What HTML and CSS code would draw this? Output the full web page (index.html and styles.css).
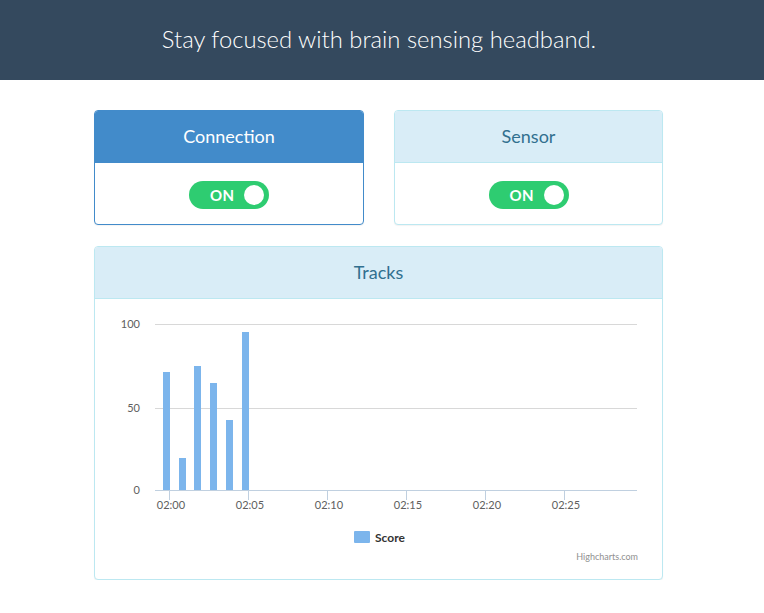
FILE: index.html
```html
<!DOCTYPE html>
<html>
<head>
<meta charset="utf-8">
<link rel="stylesheet" href="styles.css">
</head>
<body>
<header class="top">
  <h1 class="top-title">Stay focused with brain sensing headband.</h1>
</header>
<main class="wrap">
  <div class="row">
    <section class="panel panel-primary">
      <div class="panel-heading">Connection</div>
      <div class="panel-body">
        <div class="toggle"><span class="toggle-label">ON</span><span class="knob"></span></div>
      </div>
    </section>
    <section class="panel panel-info">
      <div class="panel-heading">Sensor</div>
      <div class="panel-body">
        <div class="toggle"><span class="toggle-label">ON</span><span class="knob"></span></div>
      </div>
    </section>
  </div>
  <section class="panel panel-info tracks">
    <div class="panel-heading">Tracks</div>
    <div class="chart-body">
      <svg class="chart" width="567" height="279" viewBox="95 299 567 279">
        <g class="grid">
          <line x1="155" y1="324.5" x2="637" y2="324.5"/>
          <line x1="155" y1="408.5" x2="637" y2="408.5"/>
        </g>
        <g class="axis">
          <line x1="155" y1="490.5" x2="637" y2="490.5"/>
          <line x1="169.5" y1="490" x2="169.5" y2="500"/>
          <line x1="248.5" y1="490" x2="248.5" y2="500"/>
          <line x1="327.5" y1="490" x2="327.5" y2="500"/>
          <line x1="406.5" y1="490" x2="406.5" y2="500"/>
          <line x1="485.5" y1="490" x2="485.5" y2="500"/>
          <line x1="564.5" y1="490" x2="564.5" y2="500"/>
        </g>
        <g class="bars">
          <rect x="163" y="372" width="7" height="118"/>
          <rect x="179" y="458" width="7" height="32"/>
          <rect x="194" y="366" width="7" height="124"/>
          <rect x="210" y="383" width="7" height="107"/>
          <rect x="226" y="420" width="7" height="70"/>
          <rect x="242" y="332" width="7" height="158"/>
        </g>
        <g class="ylabels">
          <text x="140" y="328">100</text>
          <text x="140" y="412">50</text>
          <text x="140" y="494">0</text>
        </g>
        <g class="xlabels">
          <text x="171" y="509">02:00</text>
          <text x="250" y="509">02:05</text>
          <text x="329" y="509">02:10</text>
          <text x="408" y="509">02:15</text>
          <text x="487" y="509">02:20</text>
          <text x="566" y="509">02:25</text>
        </g>
        <rect class="legend-sym" x="354" y="531" width="16" height="12" rx="1"/>
        <text class="legend-text" x="375" y="542">Score</text>
        <text class="credits" x="638" y="560">Highcharts.com</text>
      </svg>
    </div>
  </section>
</main>
</body>
</html>
```
FILE: styles.css
```css
* { box-sizing: border-box; }
body {
  margin: 0;
  font-family: Lato, "Open Sans", sans-serif;
  background: #fff;
  color: #333;
}
.top {
  height: 80px;
  background: #34495e;
  display: flex;
  align-items: center;
  justify-content: center;
  padding: 0 6px 3px 0;
}
.top-title {
  margin: 0;
  font-size: 23.8px;
  font-weight: 300;
  color: #fff;
}
.wrap {
  width: 570px;
  margin: 30px 0 0 94px;
}
.row {
  display: grid;
  grid-template-columns: 270px 269px;
  column-gap: 30px;
  margin-bottom: 21px;
}
.panel {
  border: 1px solid #bce8f1;
  border-radius: 4px;
  background: #fff;
  box-shadow: 0 1px 1px rgba(0,0,0,0.05);
  overflow: hidden;
}
.panel-heading {
  height: 52px;
  border-bottom: 1px solid #bce8f1;
  display: flex;
  align-items: center;
  justify-content: center;
  padding-bottom: 2px;
  font-size: 18px;
  background: #d9edf7;
  color: #31708f;
}
.panel-primary { border-color: #428bca; }
.panel-primary .panel-heading {
  background: #428bca;
  border-bottom-color: #428bca;
  color: #fff;
}
.panel-body {
  padding: 18px 0 15px;
  display: flex;
  justify-content: center;
}
.toggle {
  width: 80px;
  height: 28px;
  border-radius: 14px;
  background: #2ecc71;
  display: flex;
  align-items: center;
  padding: 0 5px 0 21px;
  justify-content: space-between;
}
.toggle-label {
  color: #fff;
  font-weight: 700;
  font-size: 15px;
  letter-spacing: 0.5px;
}
.knob {
  width: 20px;
  height: 20px;
  border-radius: 50%;
  background: #fff;
}
.tracks { width: 569px; }
.chart-body { height: 280px; }
.chart { display: block; font-family: Lato, "Open Sans", sans-serif; }
.grid line { stroke: #d8d8d8; stroke-width: 1; }
.axis line { stroke: #c0d0e0; stroke-width: 1; }
.bars rect { fill: #7cb5ec; }
.ylabels text { font-size: 11px; fill: #606060; text-anchor: end; }
.xlabels text { font-size: 11px; fill: #606060; text-anchor: middle; }
.legend-sym { fill: #7cb5ec; }
.legend-text { font-size: 12px; font-weight: 700; fill: #333; }
.credits { font-size: 9px; fill: #909090; text-anchor: end; }
```
